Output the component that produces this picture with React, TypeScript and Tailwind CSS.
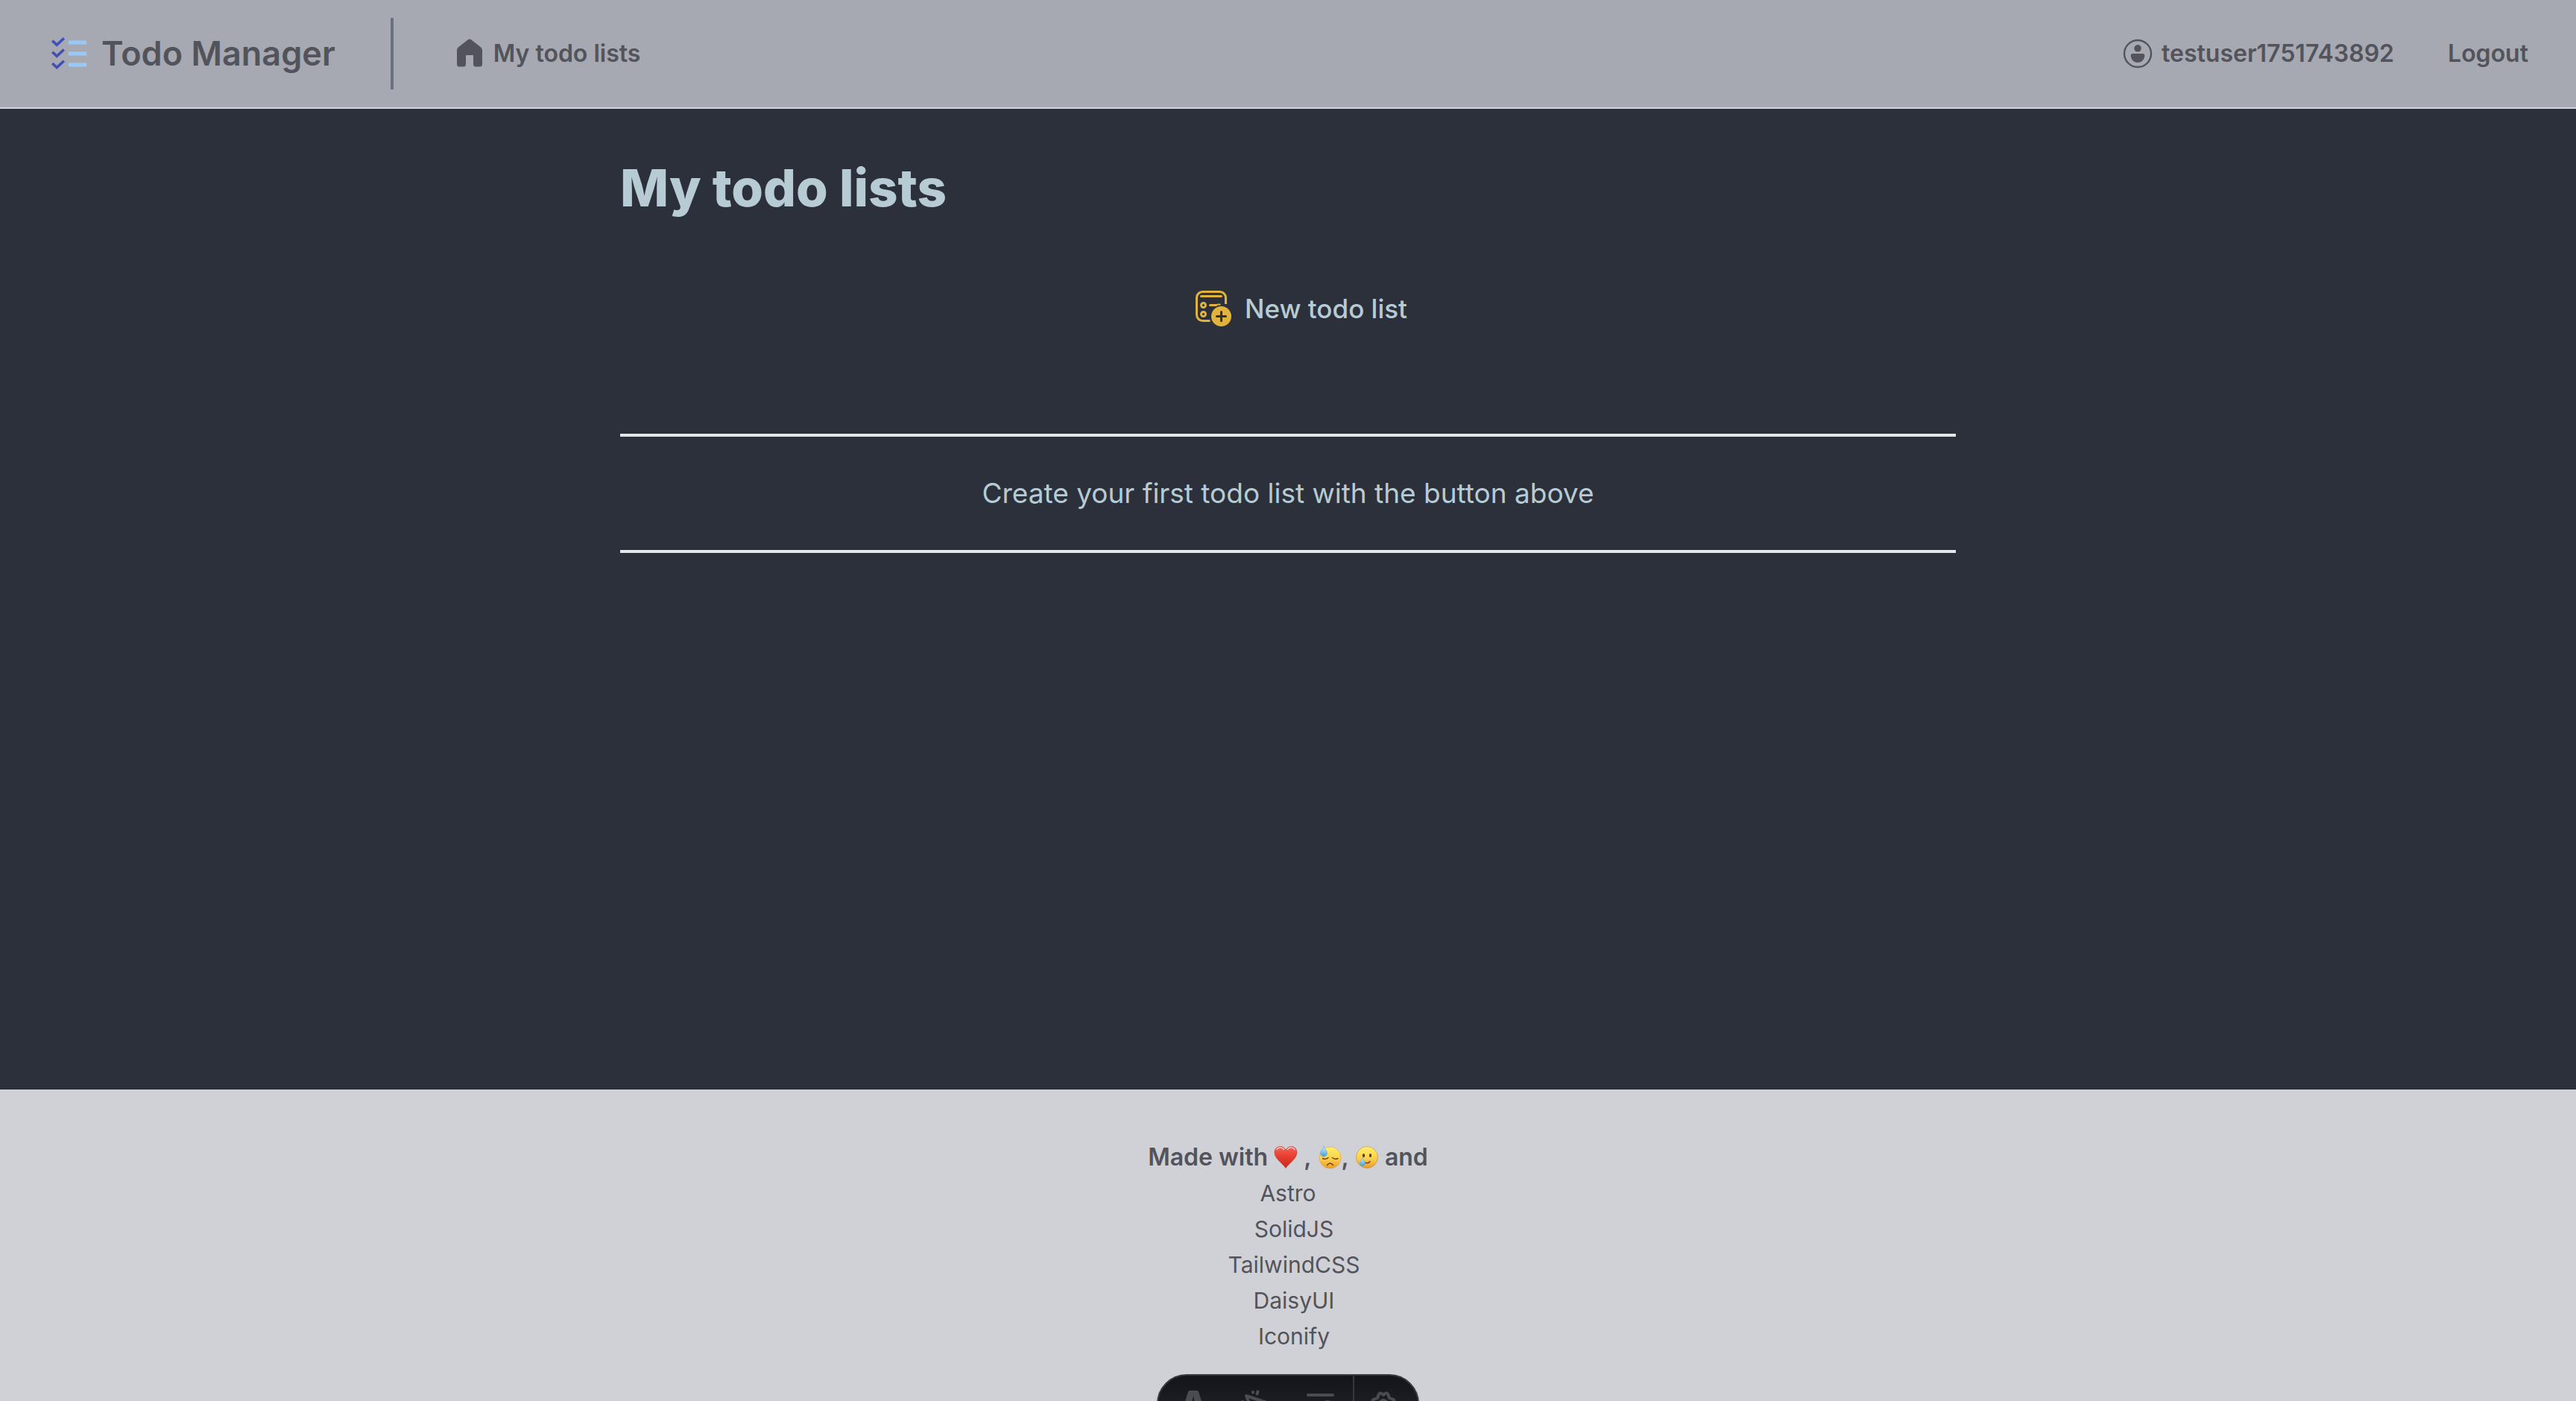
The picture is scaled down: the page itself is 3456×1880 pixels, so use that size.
import type { ReactNode } from "react";

function LogoIcon() {
  return (
    <svg viewBox="0 0 48 48" className="size-12 shrink-0" fill="none" aria-hidden="true">
      <g stroke="#4250b6" strokeWidth="3.6">
        <path d="M2.200 6.600l6 5.600L17.800 3.300" />
        <path d="M2.200 21.800l6 5.600L17.800 18.500" />
        <path d="M2.200 37l6 5.600L17.800 33.700" />
      </g>
      <path d="M24 9h24M24 24h24M24 39h24" stroke="#9bc9f5" strokeWidth="5" />
    </svg>
  );
}

function HomeIcon() {
  return (
    <svg viewBox="0 0 40 40" className="size-10 shrink-0" fill="currentColor" aria-hidden="true">
      <path d="M17.500 1.600a4 4 0 0 1 5 0L35.200 11.500a5 5 0 0 1 1.800 4V34a3.500 3.500 0 0 1-3.500 3.500h-5A3.500 3.500 0 0 1 25 34V23a1 1 0 0 0-1-1h-8a1 1 0 0 0-1 1v11a3.500 3.500 0 0 1-3.500 3.500h-5A3.500 3.500 0 0 1 3 34V15.500a5 5 0 0 1 1.800-4z" />
    </svg>
  );
}

function UserIcon() {
  return (
    <svg viewBox="0 0 40 40" className="size-10 shrink-0" fill="currentColor" aria-hidden="true">
      <circle cx="20" cy="20" r="18" fill="none" stroke="currentColor" strokeWidth="2.400" />
      <circle cx="20" cy="12.800" r="4.800" />
      <path d="M13 20h14a2.300 2.300 0 0 1 2.300 2.300C29.300 28 25 32 20 32s-9.300-4-9.300-9.700A2.300 2.300 0 0 1 13 20z" />
    </svg>
  );
}

function NewListIcon() {
  return (
    <svg viewBox="0 0 48 48" className="size-12 shrink-0" fill="none" stroke="currentColor" strokeWidth="3" strokeLinecap="round" aria-hidden="true">
      <path d="M19.500 40.500H9.500a8 8 0 0 1-8-8V9.500a8 8 0 0 1 8-8h23a8 8 0 0 1 8 8V18" strokeLinecap="butt" />
      <path d="M7.500 7.500h27" />
      <path d="M19.500 19.500h8" />
      <path d="M27 19.500q3-1.200 6.500-.8" strokeWidth="2" strokeLinecap="butt" />
      <circle cx="10.500" cy="19.500" r="3" />
      <circle cx="10.500" cy="31.500" r="3" />
      <circle cx="34.500" cy="34.500" r="13.500" fill="currentColor" stroke="none" />
      <path d="M34.500 28.500v12M28.500 34.500h12" stroke="#2b303b" />
    </svg>
  );
}

function Heart() {
  return (
    <svg viewBox="0 0 32 32" className="size-8 shrink-0" role="img" aria-label="red heart">
      <defs>
        <linearGradient id="heart" x1="0" y1="0" x2="0" y2="1">
          <stop offset="0" stopColor="#f0675a" />
          <stop offset="0.400" stopColor="#ea4335" />
          <stop offset="1" stopColor="#c9241c" />
        </linearGradient>
      </defs>
      <path d="M16 30.500C12 24 1 18 1 9.500 1 4.500 4.500 1.500 8.500 1.500c3.500 0 6.500 2 7.500 5 1-3 4-5 7.500-5 4 0 7.500 3 7.500 8C31 18 20 24 16 30.500z" fill="url(#heart)" stroke="#b8281f" strokeWidth="0.500" />
      <path d="M4 5.500c2-3.500 7-3.500 9.500 0M18.500 5.500c2-3.500 7-3.500 9.500 0" fill="none" stroke="#fbd5cf" strokeWidth="1.400" strokeLinecap="round" />
    </svg>
  );
}

function FaceDefs({ id }: { id: string }) {
  return (
    <defs>
      <linearGradient id={id} x1="0" y1="0" x2="0" y2="1">
        <stop offset="0" stopColor="#fff06a" />
        <stop offset="0.550" stopColor="#fbd04b" />
        <stop offset="1" stopColor="#eb9a2b" />
      </linearGradient>
      <linearGradient id={id + "-drop"} x1="0" y1="0" x2="0" y2="1">
        <stop offset="0" stopColor="#d4f0fd" />
        <stop offset="1" stopColor="#3fa0e2" />
      </linearGradient>
    </defs>
  );
}

function SweatFace() {
  return (
    <svg viewBox="0 0 32 32" className="size-8 shrink-0" role="img" aria-label="downcast face with sweat">
      <FaceDefs id="sweat" />
      <circle cx="16.500" cy="16.500" r="14.500" fill="url(#sweat)" stroke="#d99a34" strokeWidth="0.500" />
      <path d="M6.500 17.500q4 2 7.500-1M19.500 16.500q3.500 3 7.500 1M12.500 26.500q4-5 8 0" fill="none" stroke="#74421a" strokeWidth="1.500" strokeLinecap="round" />
      <path d="M8 .8C9.500 5 12.500 7.500 12.500 10.500a4.500 4.500 0 0 1-9 0C3.500 7.500 7 5 8 .8z" fill="url(#sweat-drop)" stroke="#4ba3dd" strokeWidth="0.500" />
    </svg>
  );
}

function TearFace() {
  return (
    <svg viewBox="0 0 32 32" className="size-8 shrink-0" role="img" aria-label="smiling face with tear">
      <FaceDefs id="tear" />
      <circle cx="16" cy="16" r="14.500" fill="url(#tear)" stroke="#b88a45" strokeWidth="0.600" />
      <ellipse cx="11.500" cy="13.500" rx="1.600" ry="2.500" fill="#5e3513" />
      <ellipse cx="20.500" cy="13.500" rx="1.600" ry="2.500" fill="#5e3513" />
      <path d="M13 23q4.500 2 7-1.500" fill="none" stroke="#74421a" strokeWidth="1.400" strokeLinecap="round" />
      <path d="M10 16.500c1 3.500 3.500 5 3.500 7.500a3.500 3.500 0 0 1-7 0c0-2.500 2.500-4 3.500-7.500z" fill="url(#tear-drop)" stroke="#4ba3dd" strokeWidth="0.500" />
    </svg>
  );
}

function ToolIcon({ children }: { children: ReactNode }) {
  return (
    <svg viewBox="0 0 40 40" className="size-10 overflow-visible" fill="none" stroke="currentColor" strokeWidth="4" strokeLinecap="round" strokeLinejoin="round" aria-hidden="true">
      {children}
    </svg>
  );
}

function Toolbar() {
  return (
    <div className="fixed bottom-[-44px] left-1/2 flex h-20 w-[352px] -translate-x-1/2 overflow-hidden rounded-full border-2 border-[#343640] bg-linear-to-b from-[#13151a] to-[#26272d] text-[#4b4c50] shadow-md">
      <button type="button" aria-label="Menu" className="flex w-[90px] items-center justify-center pl-1">
        <ToolIcon>
          <path d="M15 2h10a2 2 0 0 1 2 1.500L36 32l-12-3-4-20-4 20-12 3 9-28.500A2 2 0 0 1 15 2z" fill="currentColor" stroke="none" />
        </ToolIcon>
      </button>
      <button type="button" aria-label="Inspect" className="flex flex-1 items-center justify-center">
        <ToolIcon>
          <path d="M5 9l33 11-15 5-6 14z" />
          <path d="M14 4v.4M20.500 3.500l-1 3M0 17l1 1" />
        </ToolIcon>
      </button>
      <button type="button" aria-label="Audit" className="flex flex-1 items-center justify-center">
        <ToolIcon>
          <path d="M3 8h33M3 20h14M3 32h10" />
          <circle cx="29" cy="23" r="6" />
        </ToolIcon>
      </button>
      <button type="button" aria-label="Settings" className="flex w-[87px] items-center justify-center border-l-2 border-[#343640] pr-2">
        <ToolIcon>
          <path d="M20 8l2.500-2q3-1.500 4 2L28 12l4 1.500q3.500 1 2 4L32 20l2 2.500q1.500 3-2 4L28 28l-1.500 4q-1 3.500-4 2L20 32l-2.500 2q-3 1.500-4-2L12 28l-4-1.500q-3.500-1-2-4L8 20l-2-2.500q-1.500-3 2-4L12 12l1.500-4q1-3.500 4-2z" />
          <circle cx="20" cy="20" r="5" />
        </ToolIcon>
      </button>
    </div>
  );
}

const credits = ["SolidJS", "TailwindCSS", "DaisyUI", "Iconify"];

export default function App() {
  return (
    <div className="flex h-screen flex-col overflow-hidden bg-[#2b303b] font-['Inter',sans-serif] text-[32px] leading-[48px] text-[#b7cbd4]">
      <header className="flex h-[146px] shrink-0 items-center justify-between border-b-2 border-gray-300 bg-[#a6a9b1] pr-16 pl-[68px] font-semibold text-[#53535b]">
        <div className="flex items-center">
          <a href="#home" className="flex items-center gap-5 pr-[74px] text-[45px]">
            <LogoIcon />
            Todo Manager
          </a>
          <div className="h-24 w-1 bg-gray-500" />
          <nav className="pl-[82px]">
            <a href="#lists" className="flex items-center gap-3">
              <HomeIcon />
              My todo lists
            </a>
          </nav>
        </div>
        <div className="flex items-center gap-[72px]">
          <a href="#user" className="flex items-center gap-3">
            <UserIcon />
            testuser1751743892
          </a>
          <button type="button">Logout</button>
        </div>
      </header>

      <main className="mx-auto w-full max-w-[1792px] grow pt-[66px]">
        <h1 className="text-[69px] leading-[80px] font-extrabold">My todo lists</h1>
        <div className="flex justify-center pt-[94px] pl-9">
          <button type="button" className="flex items-center gap-[18px] text-[35px] leading-[56px] font-medium">
            <span className="text-[#e2b33c]">
              <NewListIcon />
            </span>
            New todo list
          </button>
        </div>
        <p className="mt-[140px] border-y-4 border-gray-200 py-12 text-center text-[37px] leading-[56px]">
          Create your first todo list with the button above
        </p>
      </main>

      <footer className="flex h-[418px] shrink-0 flex-col items-center bg-[#d0d1d6] pt-[67px] text-[#53535b]">
        <p className="flex items-center font-semibold">
          <span>Made with&nbsp;</span>
          <Heart />
          <span>&nbsp;,&nbsp;</span>
          <SweatFace />
          <span>,&nbsp;</span>
          <TearFace />
          <span>&nbsp;and</span>
        </p>
        <ul className="text-center text-[30px]">
          <li>
            <a href="#Astro">Astro</a>
          </li>
          {credits.map((name) => (
            <li key={name} className="pl-4">
              <a href={"#" + name}>{name}</a>
            </li>
          ))}
        </ul>
      </footer>

      <Toolbar />
    </div>
  );
}
